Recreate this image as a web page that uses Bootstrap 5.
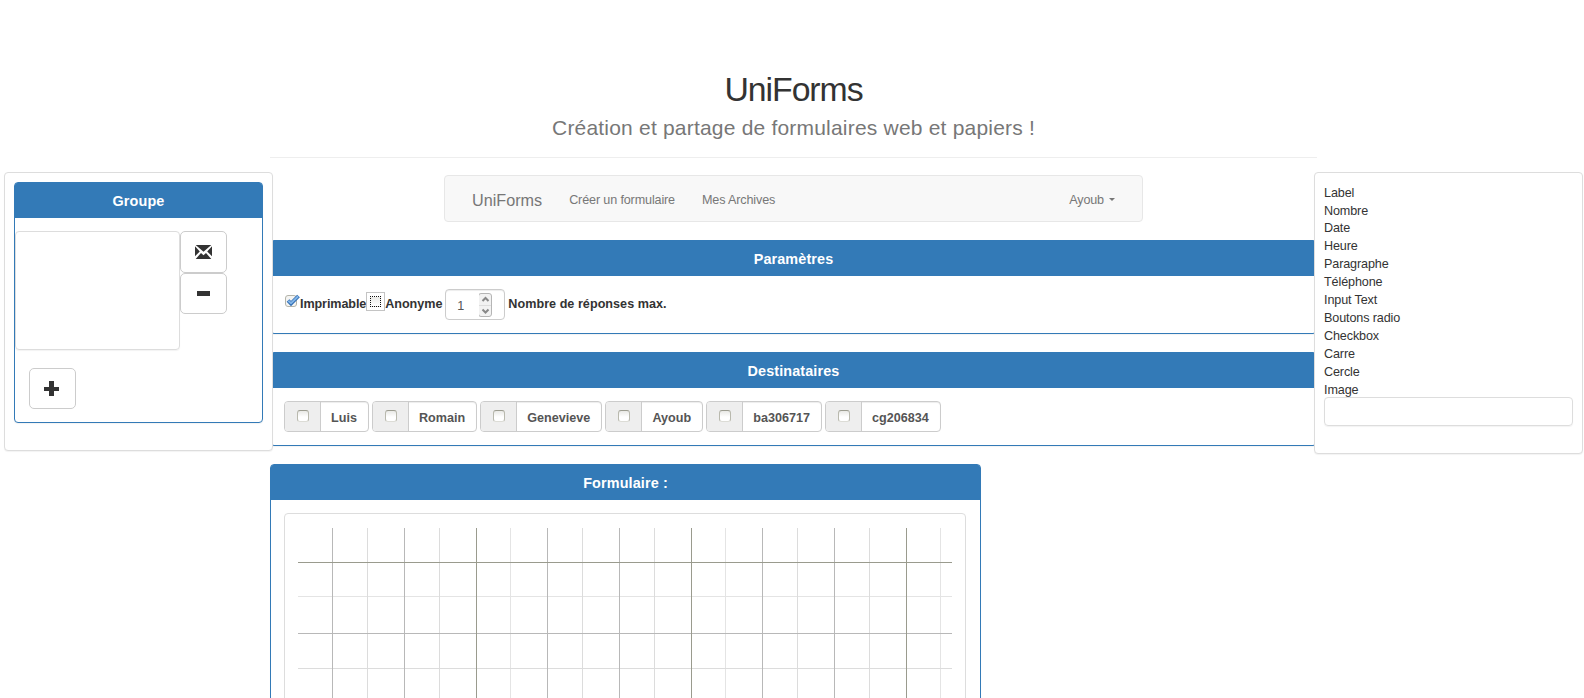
<!DOCTYPE html>
<html lang="fr">
<head>
<meta charset="utf-8">
<title>UniForms</title>
<link href="https://cdn.jsdelivr.net/npm/bootstrap@5.3.0/dist/css/bootstrap.min.css" rel="stylesheet">
<style>
:root{--uf-blue:#337ab7}
body{font:12.6px/18px "Liberation Sans",Arial,sans-serif;color:#333;background:#fff}
.page{height:698px;align-items:flex-start}
.side{width:269px;margin-top:172px;z-index:2;background:#fff;border:1px solid #ddd;border-radius:4px;box-shadow:0 1px 1px rgba(0,0,0,.05);padding:9px}
.side-left{margin-left:4px;margin-right:-3px;height:279px}
.side-right{margin-left:-3px;height:282px;padding-top:11px}
.main{width:1047px}
.title{height:158px;border-bottom:1px solid #eee;padding-top:71px}
.title h1{font-size:33.8px;line-height:36px;font-weight:400;margin:0;color:#333;letter-spacing:-1.05px}
.title p{font-size:21px;line-height:30px;margin:6px 0 0;color:#777;letter-spacing:.2px}
.topnav{width:699px;height:47px;margin:17px auto 0;background:#f8f8f8;border:1px solid #e7e7e7;border-radius:4px;padding:2px 27px 0;color:#777;letter-spacing:-.14px}
.topnav a{color:#777;text-decoration:none}
.topnav .site{font-size:16.2px;margin-right:27px;letter-spacing:0}
.link-a{margin-right:27px}
.caret{border:3.5px solid transparent;border-top-color:#777;border-bottom:0;margin-left:5px}
.panel{border:1px solid var(--uf-blue);border-radius:4px;box-shadow:0 1px 1px rgba(0,0,0,.05);background:#fff}
.panel-title{background:var(--uf-blue);color:#fff;font-weight:700;font-size:14.4px;height:35px;line-height:36px;text-align:center;letter-spacing:.12px;border-radius:2px 2px 0 0}
.main .panel{margin-top:18px}
.panel-line{height:94px}
.panel-body{padding:13px}
.group-panel{height:241px}
.group-row{padding-top:13px}
.list-box{width:165px;height:119px;border:1px solid #ddd;border-radius:4px;box-shadow:0 1px 1px rgba(0,0,0,.05)}
.tool{width:47px;height:41px;border:1px solid #ccc;border-radius:5px;background:#fff;padding:0}
.tool-mail{height:42px}
.tool-add{margin:18px 0 0 14px;padding-right:2px}
.tick{width:12px;height:12px;border:1px solid #b9b9ae;border-top-color:#9c9c90;border-bottom-color:#dcdcd6;border-radius:3px;background:linear-gradient(#e9e9e6,#fff 60%)}
.focus{width:19px;height:19px;border:1px solid #c4c4c4;flex:none;padding:3px;margin-bottom:7px}
.focus i{display:block;height:100%;border:1px dotted #111;background:linear-gradient(#e9e9e6,#fff)}
.params{height:57px;padding:13px;font-weight:700}
.params .checked{margin-bottom:8px}
.word{margin-bottom:2px;letter-spacing:-.03px}
.word-name{letter-spacing:-.1px}
.word-max{letter-spacing:.03px}
.num{width:60px;height:31px;margin:0 3px;border:1px solid #ccc;border-radius:4px;box-shadow:inset 0 1px 1px rgba(0,0,0,.075);font-weight:400;color:#555;padding:0 12px 0 11px}
.num-value{padding-top:2px}
.person{height:31px;border:1px solid #ccc;border-radius:4px;overflow:hidden;font-weight:700;color:#555;background:#fff;box-shadow:inset 0 1px 1px rgba(0,0,0,.075)}
.people{gap:3px}
.person-check{width:36px;height:100%;background:#eee;border-right:1px solid #ccc;padding:8px 0 0 12px;flex:none}
.person-name{padding:7px 11.1px 0 10px}
.form-panel{width:711px;height:260px}
.canvas-box{width:682px;height:230px;border:1px solid #ddd;border-radius:4px;padding:14px 13px}
.fields li{height:18px}
.fields li:nth-child(2){height:17px}
.fields{letter-spacing:-.12px}
.drop{height:29px;margin-top:-2px;border:1px solid #ddd;border-radius:4px;box-shadow:0 1px 1px rgba(0,0,0,.05)}
svg{display:block;flex:none}
</style>
<script src="https://cdn.jsdelivr.net/npm/bootstrap@5.3.0/dist/js/bootstrap.bundle.min.js"></script>
</head>
<body>
<div class="page d-flex overflow-hidden">
  <aside class="side side-left position-relative flex-shrink-0">
    <section class="panel group-panel">
      <div class="panel-title">Groupe</div>
      <div class="group-row d-flex align-items-start">
        <div class="list-box"></div>
        <div class="d-flex flex-column">
          <button class="tool tool-mail d-flex align-items-center justify-content-center" aria-label="Envoyer"><svg width="17" height="14" viewBox="0 0 17 14"><path fill="#333" d="M.7 0h15.600L8.500 6.800zM0 1.300 4.800 6.500 0 11.200zM17 1.300 12.200 6.500l4.800 4.700zM6 8l2.500 2.300L11 8l5.300 6H.7z"/></svg></button>
          <button class="tool d-flex align-items-center justify-content-center" aria-label="Retirer"><svg width="13" height="5"><path fill="#333" d="M0 0h13v5H0z"/></svg></button>
        </div>
      </div>
      <button class="tool tool-add d-flex align-items-center justify-content-center" aria-label="Ajouter"><svg width="15" height="15"><path fill="#333" d="M5 0h5v6h5v4h-5v5H5v-5H0V6h5z"/></svg></button>
    </section>
  </aside>

  <main class="main flex-shrink-0">
    <header class="title text-center">
      <h1>UniForms</h1>
      <p>Création et partage de formulaires web et papiers !</p>
    </header>
    <nav class="topnav d-flex align-items-center">
      <a class="site" href="#">UniForms</a>
      <a class="link-a" href="#">Créer un formulaire</a>
      <a class="me-auto" href="#">Mes Archives</a>
      <a class="d-flex align-items-center" href="#">Ayoub <span class="caret"></span></a>
    </nav>

    <section class="panel panel-line">
      <div class="panel-title">Paramètres</div>
      <div class="params d-flex align-items-center">
        <svg class="checked" width="16" height="14" viewBox="0 0 16 14"><rect x="1.500" y="1.500" width="11" height="11" rx="2.500" fill="#f4f4f2" stroke="#b4b4aa"/><path d="M4 6.500 7 9.500 14.500 2" fill="none" stroke="#2f6cb3" stroke-width="3.800"/><path d="M4.300 6.700 7 9.200 14.200 2.300" fill="none" stroke="#82b5e8" stroke-width="2"/></svg>
        <span class="word word-name">Imprimable</span>
        <span class="focus"><i></i></span>
        <span class="word">Anonyme</span>
        <span class="num d-flex align-items-center"><span class="num-value flex-grow-1">1</span>
          <svg width="13" height="24" viewBox="0 0 13 24"><rect width="13" height="23" x="-.5" y=".5" rx="2.500" fill="#f2f2f2" stroke="#b5b5b5"/><path d="M0 12.500h12" stroke="#ddd"/><path d="m3.500 8 3-3 3 3M3.500 16.500l3 3 3-3" fill="none" stroke="#888" stroke-width="2"/></svg>
        </span>
        <span class="word word-max">Nombre de réponses max.</span>
      </div>
    </section>

    <section class="panel panel-line">
      <div class="panel-title">Destinataires</div>
      <div class="panel-body people d-flex">
        <label class="person d-flex"><span class="person-check"><span class="tick d-block"></span></span><span class="person-name">Luis</span></label>
        <label class="person d-flex"><span class="person-check"><span class="tick d-block"></span></span><span class="person-name">Romain</span></label>
        <label class="person d-flex"><span class="person-check"><span class="tick d-block"></span></span><span class="person-name">Genevieve</span></label>
        <label class="person d-flex"><span class="person-check"><span class="tick d-block"></span></span><span class="person-name">Ayoub</span></label>
        <label class="person d-flex"><span class="person-check"><span class="tick d-block"></span></span><span class="person-name">ba306717</span></label>
        <label class="person d-flex"><span class="person-check"><span class="tick d-block"></span></span><span class="person-name">cg206834</span></label>
      </div>
    </section>

    <section class="panel form-panel">
      <div class="panel-title">Formulaire :</div>
      <div class="panel-body">
        <div class="canvas-box">
          <svg width="654" height="200" shape-rendering="crispEdges" fill="none">
            <path stroke="#e4e4e4" d="M212.500 0v200M427.500 0v200M642.500 0v200M0 68.500h654"/>
            <path stroke="#dcdcdc" d="M69.500 0v200M141.500 0v200M284.500 0v200M356.500 0v200M499.500 0v200M571.500 0v200M0 140.500h654"/>
            <path stroke="#b8b8b8" d="M34.500 0v200M106.500 0v200M249.500 0v200M321.500 0v200M464.500 0v200M536.500 0v200M0 105.500h654"/>
            <path stroke="#9a9b8e" d="M178.500 0v200M393.500 0v200M608.500 0v200M0 34.500h654"/>
          </svg>
        </div>
      </div>
    </section>
  </main>

  <aside class="side side-right position-relative flex-shrink-0">
    <ul class="fields list-unstyled mb-0">
      <li>Label</li><li>Nombre</li><li>Date</li><li>Heure</li><li>Paragraphe</li><li>Téléphone</li><li>Input Text</li><li>Boutons radio</li><li>Checkbox</li><li>Carre</li><li>Cercle</li><li>Image</li>
    </ul>
    <div class="drop"></div>
  </aside>
</div>
</body>
</html>
